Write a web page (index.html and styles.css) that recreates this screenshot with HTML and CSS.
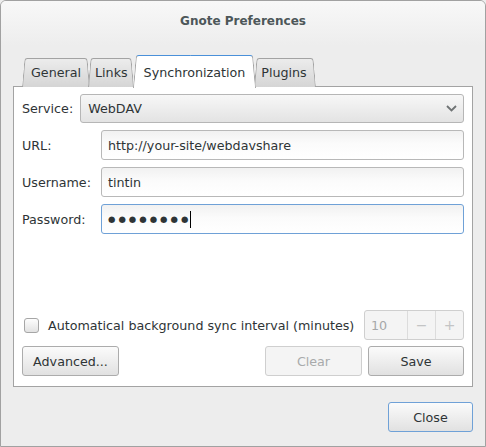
FILE: index.html
```html
<!DOCTYPE html>
<html>
<head>
<meta charset="utf-8">
<title>Gnote Preferences</title>
<link rel="stylesheet" href="styles.css">
</head>
<body>
<div class="window">
  <div class="titlebar"><span class="title">Gnote Preferences</span></div>
  <div class="content">
    <div class="notebook">
      <div class="tabs">
        <div class="tab t1"><span>General</span></div>
        <div class="tab t2"><span>Links</span></div>
        <div class="tab active"><span>Synchronization</span></div>
        <div class="tab t4"><span>Plugins</span></div>
      </div>
      <div class="panel">
        <div class="service-row">
          <span class="label">Service:</span>
          <div class="combo">
            <span>WebDAV</span>
            <svg class="chevron" width="11" height="7" viewBox="0 0 11 7"><path d="M1 1 L5.5 5.5 L10 1" fill="none" stroke="#6f7374" stroke-width="1.8"/></svg>
          </div>
        </div>
        <div class="fields">
          <span class="label">URL:</span>
          <div class="entry">http://your-site/webdavshare</div>
          <span class="label">Username:</span>
          <div class="entry">tintin</div>
          <span class="label">Password:</span>
          <div class="entry focused"><span class="dots">●●●●●●●●</span><span class="cursor"></span></div>
        </div>
        <div class="spacer"></div>
        <div class="sync-row">
          <span class="checkbox"></span>
          <span class="check-label">Automatical background sync interval (minutes)</span>
          <div class="spin">
            <span class="spin-value">10</span>
            <span class="spin-btn">−</span>
            <span class="spin-btn">+</span>
          </div>
        </div>
        <div class="button-row">
          <button class="btn adv">Advanced...</button>
          <span class="grow"></span>
          <button class="btn disabled">Clear</button>
          <button class="btn save">Save</button>
        </div>
      </div>
    </div>
    <div class="actions">
      <button class="btn default close">Close</button>
    </div>
  </div>
</div>
</body>
</html>
```
FILE: styles.css
```css
* { box-sizing: border-box; }
html, body { margin: 0; padding: 0; background: #ededed; }
body {
  font-family: "DejaVu Sans", "Liberation Sans", sans-serif;
  font-size: 12.7px;
  color: #2e3436;
}
.window {
  width: 486px;
  height: 447px;
  border: 1px solid #a1a1a1;
  border-radius: 6px 6px 0 0;
  background: #ededed;
  overflow: hidden;
  display: flex;
  flex-direction: column;
}
.titlebar {
  height: 45px;
  background: linear-gradient(#f8f8f8, #ededed);
  display: flex;
  justify-content: center;
  padding-top: 12px;
}
.title {
  font-weight: bold;
  color: #4d5759;
  font-size: 12px;
  line-height: 16px;
}
.content {
  padding: 9px 12px 0 12px;
}
.tabs {
  display: flex;
  align-items: flex-end;
  padding-left: 9px;
  height: 32px;
  margin-bottom: -1px;
  position: relative;
  z-index: 2;
}
.tab {
  position: relative;
  height: 29px;
  padding: 0 9px;
  display: flex;
  align-items: center;
  padding-bottom: 1px;
  margin-left: -2px;
  isolation: isolate;
  color: #2e3436;
}
.tab.t1 { margin-left: 0; z-index: 1; }
.tab.t2 { z-index: 2; padding: 0 7px 1px 7px; }
.tab.active { z-index: 4; height: 32px; padding: 2px 11px 0 11px; }
.tab.t4 { z-index: 1; padding-left: 7px; }
.tab::before, .tab::after {
  content: "";
  position: absolute;
  top: 0;
  bottom: 0;
  z-index: -1;
  background: linear-gradient(#ececec, #d5d5d5);
  border: 1px solid #a3a3a3;
  border-bottom: none;
}
.tab::before {
  left: 0;
  right: calc(50% - 1px);
  border-right: none;
  border-radius: 3px 0 0 0;
  transform: skewX(-5deg);
  transform-origin: bottom left;
}
.tab::after {
  right: 0;
  left: calc(50% - 1px);
  border-left: none;
  border-radius: 0 3px 0 0;
  transform: skewX(5deg);
  transform-origin: bottom right;
}
.tab.active::before, .tab.active::after {
  background: #ffffff;
  border-color: #a3a3a3;
  border-top-color: #4a90d9;
  bottom: -1px;
}
.panel {
  height: 301px;
  border: 1px solid #a3a3a3;
  background: #ffffff;
  padding: 7px 8px 10px 8px;
  display: flex;
  flex-direction: column;
  position: relative;
  z-index: 1;
}
.service-row {
  display: flex;
  align-items: center;
  gap: 7px;
  height: 29px;
}
.label { white-space: nowrap; }
.combo {
  flex: 1;
  height: 29px;
  border: 1px solid #b6b6b6;
  border-radius: 3px;
  background: linear-gradient(#f7f7f7, #e3e3e3);
  display: flex;
  align-items: center;
  justify-content: space-between;
  padding: 0 6px 0 7px;
}
.fields {
  display: grid;
  grid-template-columns: 79px 1fr;
  row-gap: 7px;
  margin-top: 7px;
  align-items: center;
}
.entry {
  height: 30px;
  border: 1px solid #b8b8b8;
  border-radius: 3px;
  background: linear-gradient(#f1f1f1, #fbfbfb 45%, #ffffff);
  display: flex;
  align-items: center;
  padding: 0 6px;
  white-space: nowrap;
}
.entry.focused { border-color: #6fa1d7; }
.dots {
  font-size: 8.5px;
  letter-spacing: 3px;
  color: #2e3436;
}
.cursor {
  display: inline-block;
  width: 1px;
  height: 17px;
  background: #000;
  margin-left: -1px;
}
.spacer { flex: 1; }
.sync-row {
  display: flex;
  align-items: center;
  height: 30px;
}
.checkbox {
  width: 15px;
  height: 15px;
  border: 1px solid #a6a6a6;
  border-radius: 3px;
  background: linear-gradient(#fdfdfd, #e2e2e2);
  margin-left: 2px;
  margin-right: 9px;
  margin-top: 1px;
}
.check-label { flex: 1; white-space: nowrap; }
.spin {
  width: 100px;
  height: 30px;
  border: 1px solid #cfcfcf;
  border-radius: 3px;
  background: #f4f4f4;
  display: flex;
  color: #a5a7a8;
}
.spin-value {
  flex: 1;
  display: flex;
  align-items: center;
  padding-left: 6px;
}
.spin-btn {
  width: 28px;
  display: flex;
  align-items: center;
  justify-content: center;
  border-left: 1px solid #dcdcdc;
  color: #c3c4c5;
  font-size: 14px;
}
.button-row {
  display: flex;
  align-items: center;
  margin-top: 6px;
  gap: 6px;
  height: 30px;
}
.grow { flex: 1; }
.btn {
  font-family: inherit;
  font-size: 12.7px;
  color: #2e3436;
  height: 30px;
  border: 1px solid #acacac;
  border-radius: 3px;
  background: linear-gradient(#fbfbfb, #e1e1e1);
  padding: 0;
  margin: 0;
}
.btn.adv { width: 97px; }
.btn.disabled {
  width: 97px;
  background: #f4f4f4;
  border-color: #cfcfcf;
  color: #a8aaab;
}
.btn.save { width: 96px; }
.actions {
  display: flex;
  justify-content: flex-end;
  margin-top: 15px;
}
.btn.close {
  width: 85px;
  border-color: #6fa1d7;
}
```
